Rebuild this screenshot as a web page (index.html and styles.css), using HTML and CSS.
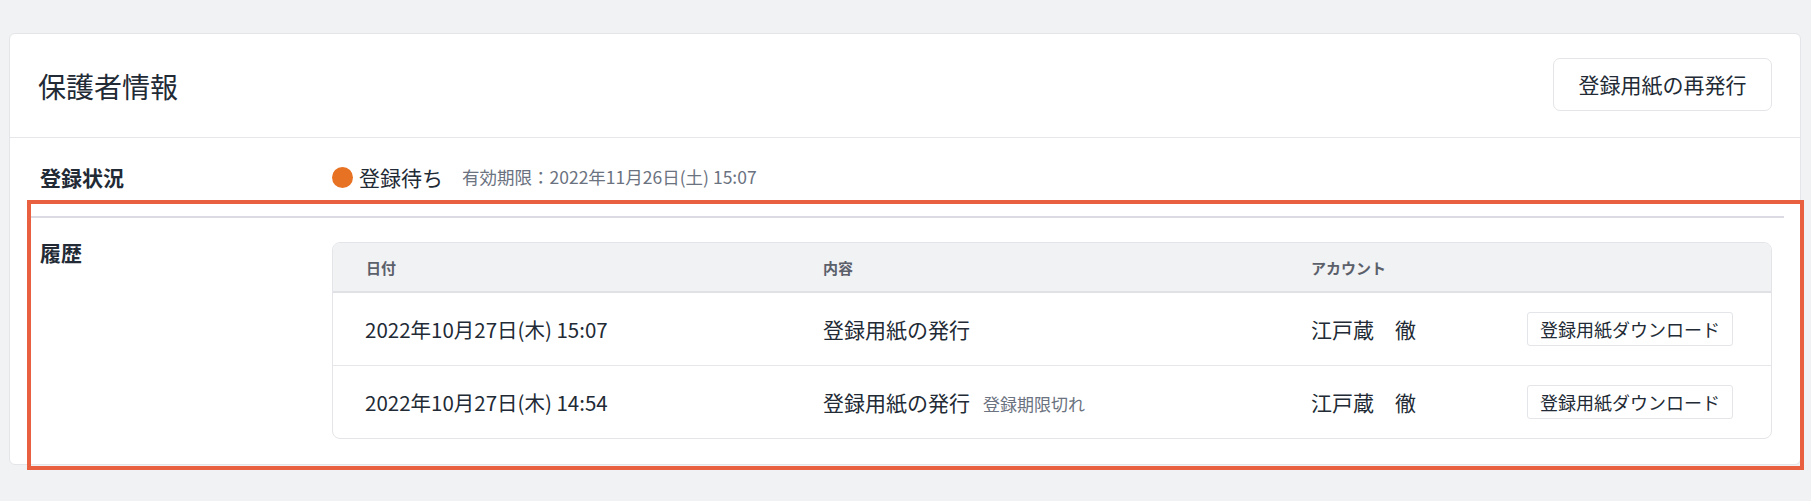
FILE: index.html
```html
<!DOCTYPE html>
<html lang="ja">
<head>
<meta charset="utf-8">
<title>保護者情報</title>
<link rel="stylesheet" href="styles.css">
</head>
<body>
<div class="page">
  <section class="card">
    <header class="card-head">
      <h1 class="card-title">保護者情報</h1>
      <button class="btn btn-lg" type="button">登録用紙の再発行</button>
    </header>
    <div class="card-body">
      <div class="field field-status">
        <div class="field-label">登録状況</div>
        <div class="field-value status">
          <span class="dot"></span>
          <span class="status-text">登録待ち</span>
          <span class="status-note">有効期限：2022年11月26日(土) 15:07</span>
        </div>
      </div>
      <div class="field field-history">
        <div class="field-label">履歴</div>
        <div class="field-value">
          <div class="table">
            <div class="tr thead">
              <div class="td">日付</div>
              <div class="td">内容</div>
              <div class="td">アカウント</div>
              <div class="td"></div>
            </div>
            <div class="tr">
              <div class="td date">2022年10月27日(木) 15:07</div>
              <div class="td">登録用紙の発行</div>
              <div class="td">江戸蔵　徹</div>
              <div class="td"><button class="btn btn-sm" type="button">登録用紙ダウンロード</button></div>
            </div>
            <div class="tr">
              <div class="td date">2022年10月27日(木) 14:54</div>
              <div class="td">登録用紙の発行<span class="note">登録期限切れ</span></div>
              <div class="td">江戸蔵　徹</div>
              <div class="td"><button class="btn btn-sm" type="button">登録用紙ダウンロード</button></div>
            </div>
          </div>
        </div>
      </div>
    </div>
  </section>
  <div class="highlight"></div>
</div>
</body>
</html>
```

FILE: styles.css
```css
* { box-sizing: border-box; }

html, body {
  margin: 0;
  padding: 0;
  background: #f1f2f4;
}

body {
  font-family: "Noto Sans CJK JP", "Noto Sans", sans-serif;
  color: #222a35;
}

.page {
  position: relative;
  padding: 33px 10px 36px 9px;
}

.card {
  background: #fff;
  border: 1px solid #e3e5e8;
  border-radius: 6px;
}

.card-head {
  height: 104px;
  display: flex;
  align-items: center;
  justify-content: space-between;
  padding: 0 28px 0 28px;
  border-bottom: 1px solid #e5e7ea;
}

.card-title {
  margin: 0;
  font-size: 28px;
  font-weight: 400;
  line-height: 1;
  color: #222a35;
}

.btn {
  font-family: inherit;
  background: #fff;
  color: #222a35;
  border: 1px solid #e3e5e8;
  cursor: pointer;
  line-height: 1;
}

.btn-lg {
  width: 219px;
  height: 53px;
  margin-bottom: 2px;
  font-size: 21px;
  border-radius: 7px;
  padding: 0;
}

.btn-sm {
  width: 206px;
  height: 34px;
  font-size: 18px;
  border-radius: 3px;
  padding: 0;
}

.card-body {
  padding: 0 16px 0 18px;
}

.field {
  display: grid;
  grid-template-columns: 292px 1fr;
  padding-left: 12px;
}

.field-label {
  font-size: 21px;
  font-weight: 700;
  line-height: 21px;
  color: #222a35;
}

.field-status {
  height: 80px;
  align-items: center;
  border-bottom: 2px solid #dcdae2;
}

.status {
  display: flex;
  align-items: center;
}

.dot {
  width: 21px;
  height: 21px;
  border-radius: 50%;
  background: #e87223;
  margin-right: 6px;
}

.status-text {
  font-size: 21px;
  line-height: 1;
  margin-right: 19px;
}

.status-note {
  font-size: 17.5px;
  line-height: 1;
  color: #6b7280;
}

.field-history {
  padding-top: 24px;
  padding-bottom: 25px;
  padding-right: 12px;
}

.table {
  border: 1px solid #e3e5e8;
  border-radius: 8px;
  overflow: hidden;
}

.tr {
  display: grid;
  grid-template-columns: 457px 488px 216px 1fr;
  align-items: center;
  height: 73px;
  border-bottom: 1px solid #e5e7ea;
  font-size: 21px;
}

.tr:last-child {
  height: 72px;
  border-bottom: none;
}

.tr.thead {
  height: 50px;
  background: #f1f2f4;
  border-bottom: 2px solid #e0e1e5;
  font-size: 15px;
  font-weight: 700;
  color: #5b606a;
}

.td {
  padding-left: 33px;
  line-height: 1;
  white-space: nowrap;
}

.td.date {
  padding-left: 32px;
  font-size: 20.5px;
}

.note {
  font-size: 17px;
  color: #6b7280;
  margin-left: 13px;
}

.highlight {
  position: absolute;
  left: 27px;
  top: 200px;
  width: 1777px;
  height: 270px;
  border: 4px solid #e8603f;
  pointer-events: none;
}
```
